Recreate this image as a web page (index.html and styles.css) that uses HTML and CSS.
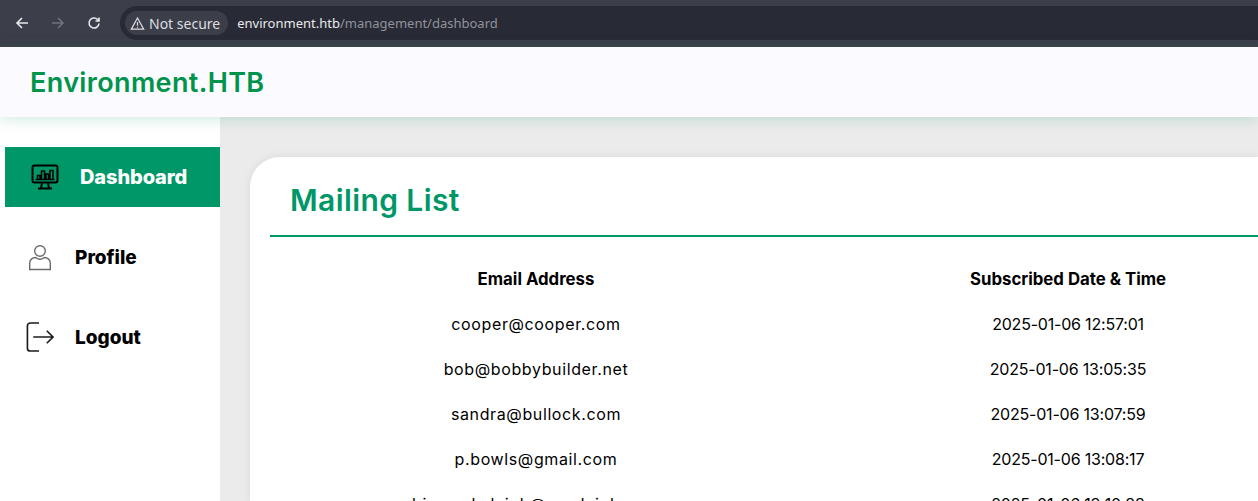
FILE: index.html
```html
<!DOCTYPE html>
<html lang="en">
<head>
    <meta charset="UTF-8">
    <title>Environment.HTB - Dashboard</title>
    <link rel="stylesheet" href="styles.css">
</head>
<body>
    <div class="chrome">
        <svg class="nav-icon" viewBox="0 0 16 16"><path d="M14 8H3M8 3L3 8l5 5" fill="none" stroke="#e8e9ec" stroke-width="1.6"/></svg>
        <svg class="nav-icon" viewBox="0 0 16 16"><path d="M2 8h11M8 3l5 5-5 5" fill="none" stroke="#71727a" stroke-width="1.6"/></svg>
        <svg class="nav-icon" viewBox="0 0 16 16"><path d="M13 8.500A5 5 0 1 1 11.600 4.500L13 6M13 2.500V6H9.500" fill="none" stroke="#e8e9ec" stroke-width="1.6"/></svg>
        <div class="omnibox">
            <span class="chip">
                <svg class="warn" viewBox="0 0 16 16"><path d="M8 2.200L14.600 14H1.400zM8 6.500v4M8 11.400v1.200" fill="none" stroke="#dcdde0" stroke-width="1.3"/></svg>
                Not secure
            </span>
            <span class="url">environment.htb<span class="url-path">/management/dashboard</span></span>
        </div>
    </div>
    <header class="topbar">
        <div class="brand">Environment.HTB</div>
    </header>
    <div class="layout">
        <aside class="sidebar">
            <a class="side-link active">
                <svg class="side-icon dash-icon" viewBox="0 0 28 26" fill="none" stroke="#000" stroke-width="2">
                    <rect x="1.500" y="1.500" width="25" height="17" rx="2"/>
                    <path d="M4.500 15.500h19" stroke-width="1.500"/>
                    <path d="M6.500 15v-3.500h2.500V15M10.500 15V7h3v8M15 15v-5h2.500v5M19 15V6.500h3V15" stroke-width="1.500"/>
                    <path d="M11 19l-1 5M17 19l1 5M7 24.500h14"/>
                </svg>
                Dashboard
            </a>
            <a class="side-link">
                <svg class="side-icon" viewBox="0 0 30 30" fill="none" stroke="#6b6b6b" stroke-width="1.400">
                    <circle cx="15" cy="9" r="5.300"/>
                    <path d="M4.700 27.500V21c0-3 2.500-5.500 6-5.500 2.500 2 6 2 8.600 0 3.500 0 6 2.500 6 5.500v6.500z"/>
                </svg>
                Profile
            </a>
            <a class="side-link">
                <svg class="side-icon" viewBox="0 0 30 31" fill="none" stroke="#1c1c1c" stroke-width="1.700">
                    <path d="M14 1H5a3 3 0 0 0-3 3v23a3 3 0 0 0 3 3h9"/>
                    <path d="M8 15.500h20M22 9l6.500 6.500L22 22"/>
                </svg>
                Logout
            </a>
        </aside>
        <main class="content">
            <section class="card">
                <h1 class="card-title">Mailing List</h1>
                <table class="mail-table">
                    <thead>
                        <tr><th>Email Address</th><th>Subscribed Date &amp; Time</th></tr>
                    </thead>
                    <tbody>
                        <tr><td>cooper@cooper.com</td><td class="date">2025-01-06 12:57:01</td></tr>
                        <tr><td>bob@bobbybuilder.net</td><td class="date">2025-01-06 13:05:35</td></tr>
                        <tr><td>sandra@bullock.com</td><td class="date">2025-01-06 13:07:59</td></tr>
                        <tr><td>p.bowls@gmail.com</td><td class="date">2025-01-06 13:08:17</td></tr>
                        <tr><td>bianca.kaleigh@sandeigh.com</td><td class="date">2025-01-06 13:10:33</td></tr>
                    </tbody>
                </table>
            </section>
        </main>
    </div>
</body>
</html>
```

FILE: styles.css
```css
html, body {
    margin: 0;
    height: 100%;
    overflow: hidden;
}
body {
    font-family: "Inter", "Liberation Sans", sans-serif;
    background: #ebebeb;
    display: flex;
    flex-direction: column;
}
.chrome {
    height: 47px;
    flex: none;
    background: #3c3e49;
    box-sizing: border-box;
    padding: 6px 0 7px 14px;
    display: flex;
    align-items: center;
    gap: 20px;
    font-family: "Noto Sans", sans-serif;
}
.nav-icon {
    width: 16px;
    height: 16px;
    flex: none;
}
.omnibox {
    flex: 1;
    height: 34px;
    margin-left: -2px;
    padding-left: 5px;
    background: #282a35;
    border-radius: 17px 0 0 17px;
    display: flex;
    align-items: center;
    font-size: 13px;
}
.chip {
    display: flex;
    align-items: center;
    gap: 4px;
    height: 24px;
    padding: 0 8px 0 5px;
    border-radius: 12px;
    background: #3c3e49;
    color: #dcdde0;
    font-size: 14px;
}
.warn {
    width: 15px;
    height: 15px;
}
.url {
    margin-left: 9px;
    color: #e8e9ec;
}
.url-path {
    color: #92939b;
}
.topbar {
    height: 70px;
    flex: none;
    background: #fafaff;
    box-shadow: 0 2px 14px rgba(0, 150, 105, 0.2);
    position: relative;
    z-index: 1;
    display: flex;
    align-items: center;
    padding-left: 30px;
}
.brand {
    color: #00934c;
    font-size: 27px;
    font-weight: 600;
    letter-spacing: 0.36px;
}
.layout {
    flex: 1;
    display: flex;
    min-height: 0;
}
.sidebar {
    width: 220px;
    flex: none;
    background: #fff;
    box-sizing: border-box;
    padding: 30px 0 0 5px;
    display: flex;
    flex-direction: column;
    gap: 20px;
}
.side-link {
    height: 60px;
    display: flex;
    align-items: center;
    gap: 20px;
    padding-left: 20px;
    font-size: 19px;
    font-weight: 800;
    color: #000;
}
.side-link.active {
    background: #009768;
    color: #fff;
    gap: 21px;
    padding-left: 26px;
    font-size: 20px;
    letter-spacing: -0.1px;
}
.side-icon {
    width: 30px;
    height: 30px;
    flex: none;
}
.dash-icon {
    width: 28px;
    height: 26px;
}
.content {
    flex: 1;
    min-width: 0;
    padding: 40px 0 0 30px;
}
.card {
    height: 100%;
    background: #fff;
    border-radius: 30px 0 0 0;
    box-shadow: 0 0 10px rgba(0, 0, 0, 0.08);
    padding: 0 0 0 20px;
    overflow: hidden;
}
.card-title {
    margin: 0;
    height: 80px;
    box-sizing: border-box;
    padding: 23px 0 0 20px;
    border-bottom: 2px solid #009768;
    color: #009768;
    font-size: 30px;
    line-height: 40px;
    font-weight: 600;
    letter-spacing: 0.4px;
}
.mail-table {
    width: 1064px;
    border-collapse: collapse;
    table-layout: fixed;
    font-size: 16px;
    letter-spacing: 0.62px;
    color: #000;
}
.mail-table th {
    height: 64px;
    box-sizing: border-box;
    padding: 20px 0 0;
    font-size: 16.8px;
    letter-spacing: 0;
    font-weight: 700;
    text-align: center;
}
.mail-table td {
    height: 45px;
    padding: 0;
    text-align: center;
}
.mail-table td.date {
    letter-spacing: -0.2px;
}
```
